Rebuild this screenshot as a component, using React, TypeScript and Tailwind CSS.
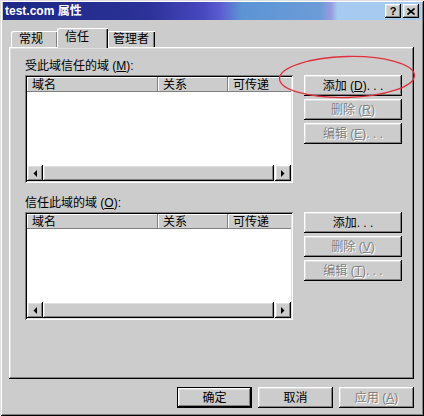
import React from "react";

const F = "font-['Liberation_Sans','Noto_Sans_CJK_SC',sans-serif]";
const raised =
  "shadow-[inset_-1px_-1px_0_#000,inset_1px_1px_0_#fff,inset_-2px_-2px_0_#808080,inset_2px_2px_0_#dfdfdf]";
const raisedSoft = "shadow-[inset_-1px_-1px_0_#808080,inset_1px_1px_0_#fff]";
const sunken =
  "shadow-[inset_1px_1px_0_#808080,inset_-1px_-1px_0_#fff,inset_2px_2px_0_#000,inset_-2px_-2px_0_#dfdfdf]";
const dis = "text-[#808080] [text-shadow:1px_1px_0_#fff]";

function Btn({
  children,
  disabled,
  className = "",
}: {
  children: React.ReactNode;
  disabled?: boolean;
  className?: string;
}) {
  return (
    <div
      className={`h-[21px] flex items-center justify-center bg-[#cccccc] text-[12px] leading-none ${raised} ${
        disabled ? dis : "text-black"
      } ${className}`}
    >
      {children}
    </div>
  );
}

function Arrow({ dir }: { dir: "l" | "r" }) {
  return (
    <svg width="4" height="7" viewBox="0 0 4 7">
      {dir === "l" ? (
        <polygon points="4,0 4,7 0.5,3.5" fill="#000" />
      ) : (
        <polygon points="0,0 0,7 3.5,3.5" fill="#000" />
      )}
    </svg>
  );
}

function HeaderCell({ w, children }: { w: string; children: React.ReactNode }) {
  return (
    <div
      className={`${w} shrink-0 h-full bg-[#cccccc] ${raisedSoft} pl-[5px] flex items-center text-[12px] leading-none text-black`}
    >
      {children}
    </div>
  );
}

function ListBox() {
  return (
    <div className={`w-[268px] h-[108px] p-[2px] bg-white ${sunken}`}>
      <div className="w-full h-full flex flex-col overflow-hidden">
        <div className="h-[15px] flex shrink-0">
          <HeaderCell w="w-[131px]">域名</HeaderCell>
          <HeaderCell w="w-[70px]">关系</HeaderCell>
          <HeaderCell w="w-[70px]">可传递</HeaderCell>
        </div>
        <div className="flex-1 bg-white" />
        <div className="h-[16px] flex shrink-0 bg-[#e6e6e6]">
          <div className={`w-[16px] h-full bg-[#cccccc] ${raised} flex items-center justify-center`}>
            <Arrow dir="l" />
          </div>
          <div className={`flex-1 h-full bg-[#cccccc] ${raised}`} />
          <div className="w-[1px]" />
          <div className={`w-[16px] h-full bg-[#cccccc] ${raised} flex items-center justify-center`}>
            <Arrow dir="r" />
          </div>
        </div>
      </div>
    </div>
  );
}

function Section({
  label,
  buttons,
  className = "",
}: {
  label: React.ReactNode;
  buttons: { text: React.ReactNode; disabled?: boolean }[];
  className?: string;
}) {
  return (
    <div className={className}>
      <div className="h-[14px] leading-[14px] text-[12px] text-black">{label}</div>
      <div className="mt-[2px] flex gap-[11px]">
        <ListBox />
        <div className="flex flex-col gap-[3px]">
          {buttons.map((b, i) => (
            <Btn key={i} disabled={b.disabled} className="w-[98px]">
              {b.text}
            </Btn>
          ))}
        </div>
      </div>
    </div>
  );
}

export default function App() {
  return (
    <div
      className={`${F} relative w-[424px] h-[416px] bg-[#cccccc] flex flex-col shadow-[inset_1px_1px_0_#dfdfdf,inset_-1px_-1px_0_#000,inset_2px_2px_0_#fff,inset_-2px_-2px_0_#808080] overflow-hidden`}
    >
      {/* Title bar */}
      <div className="mx-[3px] mt-[2px] h-[18px] shrink-0 flex items-center bg-[linear-gradient(to_right,#1c2884_0%,#2c3298_35%,#4848c0_48%,#5c5cd0_52%,#5c94d4_57%,#6c9cd8_76%,#9a9ae0_78.5%,#a6caf0_80%,#a6caf0_100%)]">
        <div className="pl-[2px] text-white font-bold text-[12px] leading-none">test.com 属性</div>
        <div className="ml-auto mr-[2px] flex gap-[2px]">
          <div className={`w-[16px] h-[14px] bg-[#cccccc] ${raised} flex items-center justify-center text-[11px] font-bold leading-none text-black`}>
            ?
          </div>
          <div className={`w-[16px] h-[14px] bg-[#cccccc] ${raised} flex items-center justify-center`}>
            <svg width="8" height="7" viewBox="0 0 8 7">
              <path d="M0.5 0.5 L7.5 6.5 M7.5 0.5 L0.5 6.5" stroke="#000" strokeWidth="1.6" />
            </svg>
          </div>
        </div>
      </div>

      {/* Tabs */}
      <div className="h-[27px] shrink-0 flex items-end pl-[11px] text-[12px] text-black">
        <div className="w-[47px] h-[16px] pl-[8px] flex items-center rounded-tl-[2px] shadow-[inset_1px_1px_0_#fff,inset_-1px_0_0_#000,inset_-2px_0_0_#808080]">
          常规
        </div>
        <div className="relative top-[1px] z-10 -ml-[1px] w-[51px] h-[20px] pl-[8px] pb-[3px] flex items-center bg-[#cccccc] rounded-tl-[2px] shadow-[inset_1px_1px_0_#fff,inset_-1px_0_0_#000,inset_-2px_0_0_#808080]">
          信任
        </div>
        <div className="w-[47px] h-[16px] pl-[5px] flex items-center shadow-[inset_1px_1px_0_#fff,inset_-1px_0_0_#000,inset_-2px_0_0_#808080]">
          管理者
        </div>
      </div>

      {/* Panel */}
      <div className={`ml-[9px] w-[405px] h-[332px] shrink-0 bg-[#cccccc] ${raised} pt-[12px] pl-[16px]`}>
        <Section
          label={
            <>
              受此域信任的域 (<span className="underline">M</span>):
            </>
          }
          buttons={[
            {
              text: (
                <>
                  添加 (<span className="underline">D</span>). . .
                </>
              ),
            },
            {
              text: (
                <>
                  删除 (<span className="underline">R</span>)
                </>
              ),
              disabled: true,
            },
            {
              text: (
                <>
                  编辑 (<span className="underline">E</span>). . .
                </>
              ),
              disabled: true,
            },
          ]}
        />
        <Section
          className="mt-[13px]"
          label={
            <>
              信任此域的域 (<span className="underline">O</span>):
            </>
          }
          buttons={[
            { text: <>添加. . .</> },
            {
              text: (
                <>
                  删除 (<span className="underline">V</span>)
                </>
              ),
              disabled: true,
            },
            {
              text: (
                <>
                  编辑 (<span className="underline">T</span>). . .
                </>
              ),
              disabled: true,
            },
          ]}
        />
      </div>

      {/* Bottom buttons */}
      <div className="mt-[8px] flex justify-end gap-[6px] pr-[10px]">
        <div className="w-[75px] h-[21px] border border-black">
          <div className={`w-full h-full flex items-center justify-center bg-[#cccccc] text-[12px] leading-none text-black ${raised}`}>
            确定
          </div>
        </div>
        <Btn className="w-[75px]">取消</Btn>
        <Btn className="w-[75px]" disabled>
          应用 (<span className="underline">A</span>)
        </Btn>
      </div>

      {/* Red annotation ellipse */}
      <svg
        className="absolute left-[278px] top-[54px] pointer-events-none"
        width="138"
        height="46"
        viewBox="0 0 138 46"
      >
        <ellipse
          cx="69"
          cy="23"
          rx="67.5"
          ry="20.5"
          fill="none"
          stroke="#e0303c"
          strokeWidth="1.3"
          transform="rotate(-1.5 69 23)"
        />
      </svg>
    </div>
  );
}
